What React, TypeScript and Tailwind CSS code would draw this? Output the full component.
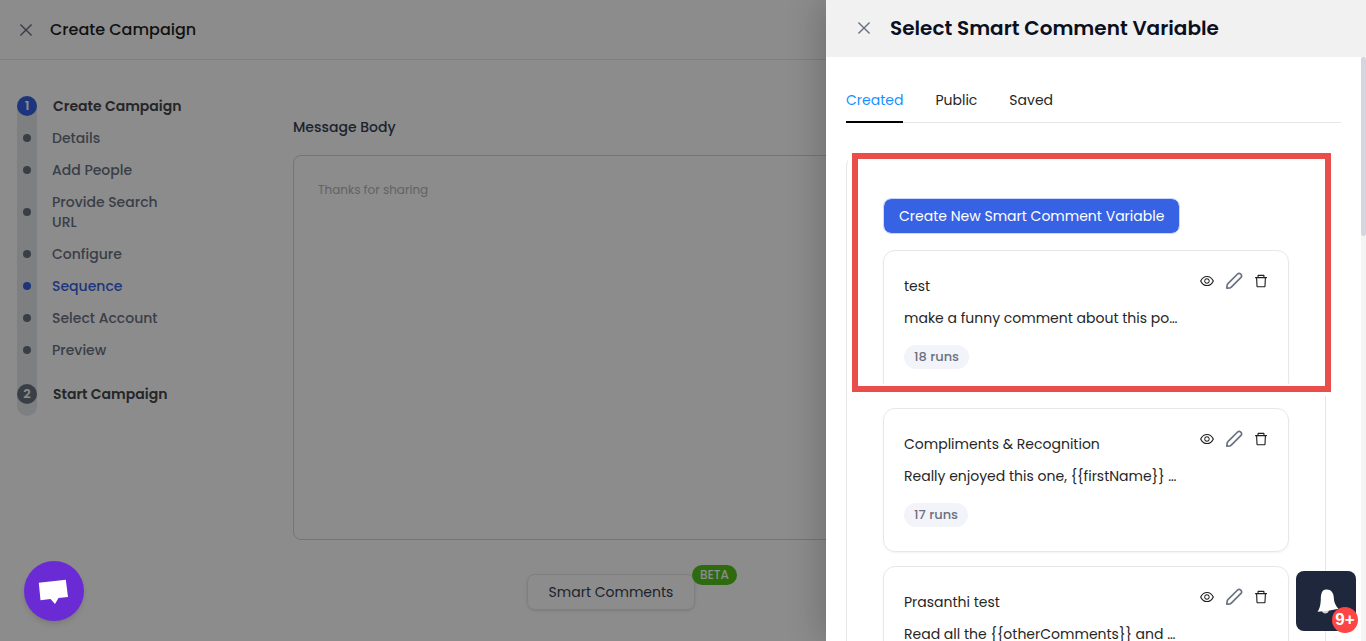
import { useState } from "react";
import { AiOutlineClose, AiOutlineDelete, AiOutlineEye } from "react-icons/ai";

type Step = { label: string; current?: boolean };

type SmartVariable = { id: number; title: string; prompt: string; runs: number };

const STEPS: Step[] = [
  { label: "Details" },
  { label: "Add People" },
  { label: "Provide Search URL" },
  { label: "Configure" },
  { label: "Sequence", current: true },
  { label: "Select Account" },
  { label: "Preview" },
];

const TABS = ["Created", "Public", "Saved"];

const VARIABLES: SmartVariable[] = [
  { id: 1, title: "test", prompt: "make a funny comment about this po…", runs: 18 },
  { id: 2, title: "Compliments & Recognition", prompt: "Really enjoyed this one, {{firstName}} …", runs: 17 },
  { id: 3, title: "Prasanthi test", prompt: "Read all the {{otherComments}} and …", runs: 12 },
];

function PencilIcon() {
  return (
    <svg viewBox="0 0 18 18" className="h-[18px] w-[18px]" fill="none" stroke="currentColor" strokeWidth="1.7" strokeLinejoin="round" aria-hidden>
      <path d="M1.8 16.2l.4-3.2c.1-.5.3-1 .7-1.3L12.6 2a2.1 2.1 0 0 1 3 0l.4.4a2.1 2.1 0 0 1 0 3L6.3 15.1c-.4.4-.8.6-1.3.7z" />
    </svg>
  );
}

function Stepper() {
  return (
    <ol className="text-[14px] leading-5">
      <li className="flex gap-4">
        <span className="w-5 shrink-0 rounded-t-full bg-gray-200">
          <span className="flex h-5 w-5 items-center justify-center rounded-full bg-[#3762e3] text-[13px] font-semibold text-white">1</span>
        </span>
        <span className="pb-1.5 font-semibold text-[#46464c]">Create Campaign</span>
      </li>
      {STEPS.map((step) => (
        <li key={step.label} className="flex gap-[15px]">
          <span className="flex w-5 shrink-0 items-center justify-center bg-gray-200">
            <span className={`h-2 w-2 rounded-full ${step.current ? "bg-[#3762e3]" : "bg-gray-500"}`} />
          </span>
          <a
            href="#"
            aria-current={step.current ? "step" : undefined}
            className={`w-[130px] py-1.5 font-medium ${step.current ? "text-[#3762e3]" : "text-gray-500"}`}
          >
            {step.label}
          </a>
        </li>
      ))}
      <li className="flex gap-4">
        <span className="w-5 shrink-0 rounded-b-full bg-gray-200 pt-[18px]">
          <span className="flex h-5 w-5 items-center justify-center rounded-full bg-gray-500 text-[13px] font-semibold text-white">2</span>
        </span>
        <span className="pt-[18px] pb-3 font-semibold text-[#46464c]">Start Campaign</span>
      </li>
    </ol>
  );
}

function CampaignPage() {
  return (
    <div className="h-full">
      <header className="flex h-[60px] items-center gap-[15px] border-b border-gray-200 pl-[17px]">
        <button aria-label="Close campaign" className="text-gray-500">
          <AiOutlineClose className="h-[18px] w-[18px]" aria-hidden />
        </button>
        <h1 className="text-[16px] font-medium text-[#1f1f1f]">Create Campaign</h1>
      </header>
      <div className="flex">
        <aside className="w-[293px] shrink-0 pt-9 pl-[17px]">
          <Stepper />
        </aside>
        <main className="max-w-[636px] flex-1 pt-[57px]">
          <label htmlFor="message-body" className="block text-[14px] leading-5 font-medium text-gray-700">
            Message Body
          </label>
          <textarea
            id="message-body"
            placeholder="Thanks for sharing"
            className="mt-[18px] block h-[385px] w-full resize-none rounded-lg border border-gray-300 px-6 py-6 text-[12px] leading-5 placeholder:text-[#b5b5b5]"
          />
          <div className="mt-[34px] flex justify-center">
            <div className="relative">
              <button className="h-9 w-[168px] rounded-lg border border-gray-200 text-[14px] text-gray-700 shadow-sm">
                Smart Comments
              </button>
              <span className="absolute -top-[9px] left-[165px] flex h-5 w-[45px] items-center justify-center rounded-full bg-[#52c41a] text-[12px] font-medium text-white">
                BETA
              </span>
            </div>
          </div>
        </main>
      </div>
    </div>
  );
}

function VariableCard({ variable }: { variable: SmartVariable }) {
  return (
    <article className="flex justify-between rounded-xl border border-gray-200 py-6 pr-[19px] pl-5 shadow-xs">
      <div className="text-[14px] leading-[22px] text-[#262626]">
        <h3>{variable.title}</h3>
        <p className="mt-2.5 whitespace-nowrap">{variable.prompt}</p>
        <span className="mt-4 inline-block rounded-full bg-[#f3f4f9] px-2.5 text-[13px] leading-6 font-medium text-gray-500">
          {variable.runs} runs
        </span>
      </div>
      <div className="-mt-[3px] flex h-[18px] items-center gap-2.5 text-[#1f1f1f]">
        <button aria-label={`View ${variable.title}`}>
          <AiOutlineEye className="h-4 w-4" aria-hidden />
        </button>
        <button aria-label={`Edit ${variable.title}`} className="text-gray-500">
          <PencilIcon />
        </button>
        <button aria-label={`Delete ${variable.title}`}>
          <AiOutlineDelete className="h-4 w-4" aria-hidden />
        </button>
      </div>
    </article>
  );
}

function VariableDrawer() {
  const [tab, setTab] = useState("Created");

  return (
    <section className="absolute inset-y-0 right-0 flex w-[540px] flex-col bg-white shadow-[-6px_0_32px_rgba(0,0,0,0.2)]">
      <header className="flex h-[57px] shrink-0 items-center gap-[17px] bg-[#f1f1f1] pb-0.5 pl-[29px]">
        <button aria-label="Close drawer" className="text-gray-500">
          <AiOutlineClose className="h-[18px] w-[18px]" aria-hidden />
        </button>
        <h2 className="text-[20px] font-semibold text-[#0b1020]">Select Smart Comment Variable</h2>
      </header>
      <div className="flex min-h-0 flex-1">
        <div className="min-w-0 flex-1 overflow-hidden px-5 pt-7">
          <div role="tablist" className="flex gap-8 border-b border-gray-200 text-[14px] leading-[30px]">
            {TABS.map((name) => (
              <button
                key={name}
                role="tab"
                aria-selected={tab === name}
                onClick={() => setTab(name)}
                className={`-mb-px border-b-2 pb-1.5 ${
                  tab === name ? "border-black text-[#1890ff]" : "border-transparent text-[#262626]"
                }`}
              >
                {name}
              </button>
            ))}
          </div>
          <div className="relative mt-[31px] mr-[15px] rounded-xl border border-gray-200 px-9 pt-[43px]">
            <button className="h-9 rounded-lg border border-[#c9d8fb] bg-[#3762e3] bg-clip-padding px-[15px] text-[14px] text-white">
              Create New Smart Comment Variable
            </button>
            <div className="mt-4 flex flex-col gap-3.5">
              {VARIABLES.map((variable) => (
                <VariableCard key={variable.id} variable={variable} />
              ))}
            </div>
            {/* Red callout around the create button and the first card */}
            <div className="pointer-events-none absolute -top-0.5 -right-1.5 left-[5px] h-[239px] border-6 border-[#ea4e4b] shadow-[0_0_0_4px_white,inset_0_0_0_2px_white]" />
          </div>
        </div>
        <div className="w-[5px] bg-[#f4f4f4]">
          <div className="h-[179px] rounded-full bg-[#d5d5df]" />
        </div>
      </div>
    </section>
  );
}

export default function App() {
  return (
    <div className="relative h-screen overflow-hidden bg-white font-['Poppins','Inter',sans-serif]">
      <CampaignPage />
      <div className="absolute inset-0 bg-black/45" />
      <VariableDrawer />
      <button aria-label="Open chat" className="absolute bottom-5 left-6 h-[60px] w-[60px] rounded-full bg-[#6a2bd5] shadow-md">
        <svg viewBox="0 0 60 60" className="h-full w-full" fill="white" aria-hidden>
          <path d="M14.8 21.8L41.8 18.8L44 36L34.5 37L31 43L26.5 38L16.5 39.2z" />
        </svg>
      </button>
      <button aria-label="Notifications" className="absolute right-2.5 bottom-2.5 h-[60px] w-[60px] rounded-lg bg-[#1e273c]">
        <svg viewBox="0 0 60 60" className="h-full w-full" fill="white" aria-hidden>
          <path d="M26 40c.5 3.500 6.500 3.500 7-1z" fill="#d4d4d4" />
          <path d="M30 18.500c5-.3 7.500 3 7.800 8 .2 5 1.500 7.500 4.700 11.300-6.500 1.500-14 2.700-21 3 2.500-3.800 3.200-7.300 3.300-13.300.1-5.300 1.400-8.700 5.200-9z" />
        </svg>
        <span className="absolute -right-0.5 -bottom-0.5 flex h-[26px] w-[26px] items-center justify-center rounded-full bg-[#fd4545] font-['Liberation_Sans',sans-serif] text-[17px] font-bold text-white">
          9+
        </span>
      </button>
    </div>
  );
}
